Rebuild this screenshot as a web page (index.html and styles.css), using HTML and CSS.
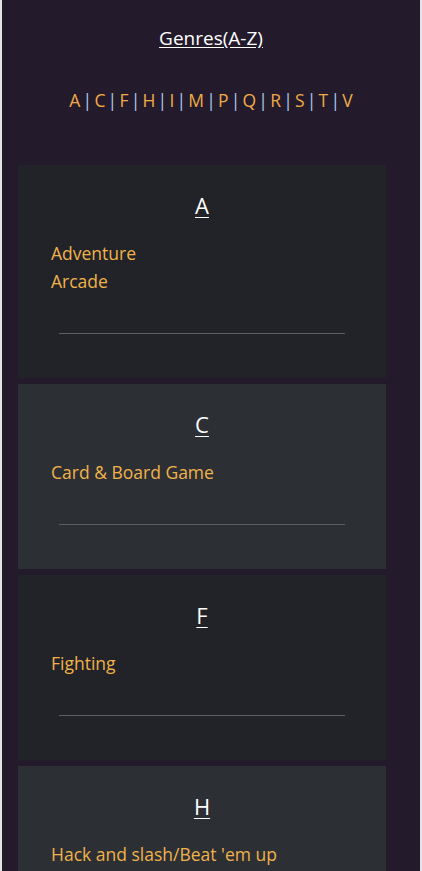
FILE: index.html
```html
<!DOCTYPE html>
<html>
<head>
<meta charset="utf-8">
<link rel="stylesheet" href="styles.css">
</head>
<body>
<div class="page">
  <header class="head">
    <h1 class="title"><a href="#">Genres(A-Z)</a></h1>
    <nav class="letters">
      <a href="#">A</a><span class="sep">|</span><a href="#">C</a><span class="sep">|</span><a href="#">F</a><span class="sep">|</span><a href="#">H</a><span class="sep">|</span><a href="#">I</a><span class="sep">|</span><a href="#">M</a><span class="sep">|</span><a href="#">P</a><span class="sep">|</span><a href="#">Q</a><span class="sep">|</span><a href="#">R</a><span class="sep">|</span><a href="#">S</a><span class="sep">|</span><a href="#">T</a><span class="sep">|</span><a href="#">V</a>
    </nav>
  </header>
  <section class="card dark">
    <h2 class="letter"><a href="#">A</a></h2>
    <ul class="items"><li>Adventure</li><li>Arcade</li></ul>
    <hr class="rule">
  </section>
  <section class="card light">
    <h2 class="letter"><a href="#">C</a></h2>
    <ul class="items"><li>Card &amp; Board Game</li></ul>
    <hr class="rule">
  </section>
  <section class="card dark">
    <h2 class="letter"><a href="#">F</a></h2>
    <ul class="items"><li>Fighting</li></ul>
    <hr class="rule">
  </section>
  <section class="card light">
    <h2 class="letter"><a href="#">H</a></h2>
    <ul class="items"><li>Hack and slash/Beat 'em up</li></ul>
    <hr class="rule">
  </section>
</div>
</body>
</html>
```
FILE: styles.css
```css
html, body {
  margin: 0;
  padding: 0;
  background: #e4e4e6;
  height: 100%;
  overflow: hidden;
}
.page {
  margin: 0 2px;
  background: #231b2c;
  min-height: 100%;
  font-family: "Open Sans", "Noto Sans", sans-serif;
  padding: 25px 0 20px 16px;
  box-sizing: border-box;
  display: flex;
  flex-direction: column;
  gap: 6px;
}
.head {
  width: 386px;
  text-align: center;
  margin-bottom: 47px;
}
.title {
  margin: 0;
  font-size: 19px;
  font-weight: 400;
  line-height: 26px;
}
.title a {
  color: #ffffff;
  text-decoration: underline;
  text-underline-offset: 2px;
}
.letters {
  margin-top: 37px;
  font-size: 17.5px;
  line-height: 24px;
  display: flex;
  justify-content: center;
  gap: 2.2px;
}
.letters a {
  color: #f0aa48;
  text-decoration: none;
}
.sep {
  color: #a9c7e8;
}
.card {
  width: 368px;
  box-sizing: border-box;
  padding: 25px 33px 44px;
  display: flex;
  flex-direction: column;
  flex-shrink: 0;
}
.dark { background: #212328; }
.light { background: #2c2f34; }
.letter {
  margin: 0;
  text-align: center;
  font-size: 22px;
  font-weight: 400;
  line-height: 30px;
}
.letter a {
  color: #ffffff;
  text-decoration: underline;
  text-underline-offset: 3px;
  text-decoration-thickness: 1px;
}
.items {
  list-style: none;
  margin: 19px 0 0;
  padding: 0;
  font-size: 17.5px;
  line-height: 28px;
  color: #f0b24b;
}
.rule {
  margin: 38px 8px 0;
  border: 0;
  border-top: 1px solid #5c5e63;
}
```
